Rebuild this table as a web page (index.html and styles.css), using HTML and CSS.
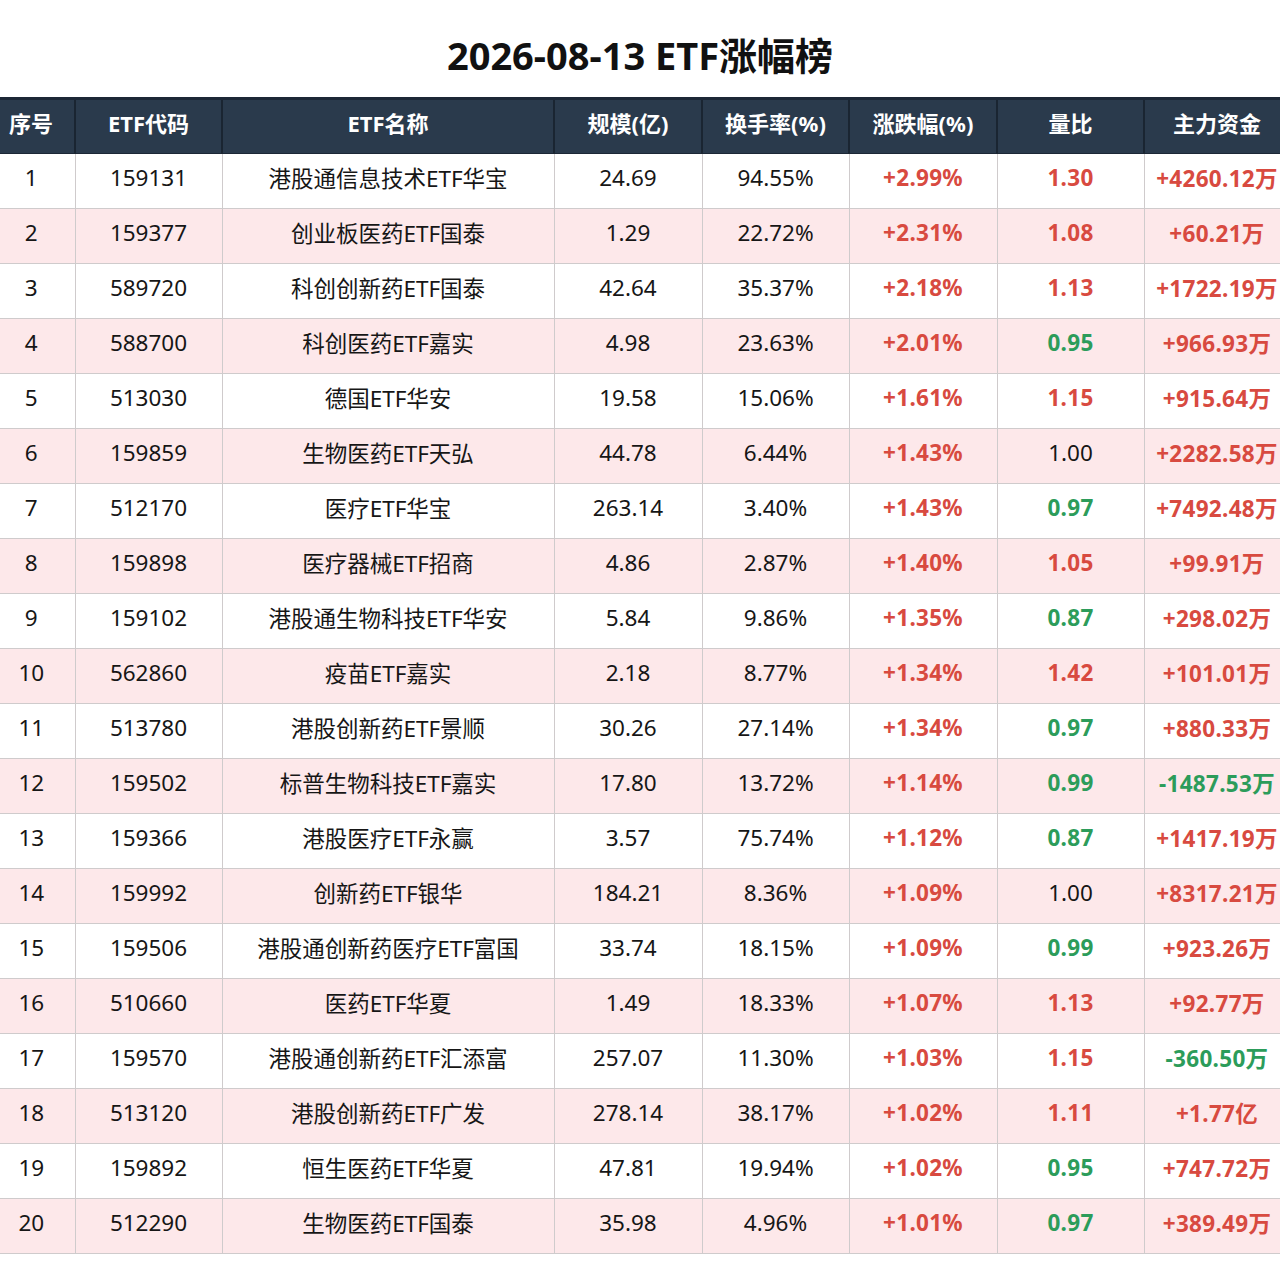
FILE: index.html
```html
<!DOCTYPE html>
<html lang="zh-CN">
<head>
<meta charset="utf-8">
<title>2026-08-13 ETF涨幅榜</title>
<link rel="stylesheet" href="styles.css">
</head>
<body>
<div class="page">
  <h1 class="title">2026-08-13 ETF涨幅榜</h1>
  <table class="rank">
    <colgroup>
      <col class="c-no"><col class="c-code"><col class="c-name"><col class="c-size">
      <col class="c-turn"><col class="c-chg"><col class="c-vr"><col class="c-flow">
    </colgroup>
    <thead>
      <tr><th>序号</th><th>ETF代码</th><th>ETF名称</th><th>规模(亿)</th><th>换手率(%)</th><th>涨跌幅(%)</th><th>量比</th><th>主力资金</th></tr>
    </thead>
    <tbody>
      <tr><td>1</td><td>159131</td><td>港股通信息技术ETF华宝</td><td>24.69</td><td>94.55%</td><td class="up">+2.99%</td><td class="up">1.30</td><td class="up">+4260.12万</td></tr>
      <tr><td>2</td><td>159377</td><td>创业板医药ETF国泰</td><td>1.29</td><td>22.72%</td><td class="up">+2.31%</td><td class="up">1.08</td><td class="up">+60.21万</td></tr>
      <tr><td>3</td><td>589720</td><td>科创创新药ETF国泰</td><td>42.64</td><td>35.37%</td><td class="up">+2.18%</td><td class="up">1.13</td><td class="up">+1722.19万</td></tr>
      <tr><td>4</td><td>588700</td><td>科创医药ETF嘉实</td><td>4.98</td><td>23.63%</td><td class="up">+2.01%</td><td class="down">0.95</td><td class="up">+966.93万</td></tr>
      <tr><td>5</td><td>513030</td><td>德国ETF华安</td><td>19.58</td><td>15.06%</td><td class="up">+1.61%</td><td class="up">1.15</td><td class="up">+915.64万</td></tr>
      <tr><td>6</td><td>159859</td><td>生物医药ETF天弘</td><td>44.78</td><td>6.44%</td><td class="up">+1.43%</td><td>1.00</td><td class="up">+2282.58万</td></tr>
      <tr><td>7</td><td>512170</td><td>医疗ETF华宝</td><td>263.14</td><td>3.40%</td><td class="up">+1.43%</td><td class="down">0.97</td><td class="up">+7492.48万</td></tr>
      <tr><td>8</td><td>159898</td><td>医疗器械ETF招商</td><td>4.86</td><td>2.87%</td><td class="up">+1.40%</td><td class="up">1.05</td><td class="up">+99.91万</td></tr>
      <tr><td>9</td><td>159102</td><td>港股通生物科技ETF华安</td><td>5.84</td><td>9.86%</td><td class="up">+1.35%</td><td class="down">0.87</td><td class="up">+298.02万</td></tr>
      <tr><td>10</td><td>562860</td><td>疫苗ETF嘉实</td><td>2.18</td><td>8.77%</td><td class="up">+1.34%</td><td class="up">1.42</td><td class="up">+101.01万</td></tr>
      <tr><td>11</td><td>513780</td><td>港股创新药ETF景顺</td><td>30.26</td><td>27.14%</td><td class="up">+1.34%</td><td class="down">0.97</td><td class="up">+880.33万</td></tr>
      <tr><td>12</td><td>159502</td><td>标普生物科技ETF嘉实</td><td>17.80</td><td>13.72%</td><td class="up">+1.14%</td><td class="down">0.99</td><td class="down">-1487.53万</td></tr>
      <tr><td>13</td><td>159366</td><td>港股医疗ETF永赢</td><td>3.57</td><td>75.74%</td><td class="up">+1.12%</td><td class="down">0.87</td><td class="up">+1417.19万</td></tr>
      <tr><td>14</td><td>159992</td><td>创新药ETF银华</td><td>184.21</td><td>8.36%</td><td class="up">+1.09%</td><td>1.00</td><td class="up">+8317.21万</td></tr>
      <tr><td>15</td><td>159506</td><td>港股通创新药医疗ETF富国</td><td>33.74</td><td>18.15%</td><td class="up">+1.09%</td><td class="down">0.99</td><td class="up">+923.26万</td></tr>
      <tr><td>16</td><td>510660</td><td>医药ETF华夏</td><td>1.49</td><td>18.33%</td><td class="up">+1.07%</td><td class="up">1.13</td><td class="up">+92.77万</td></tr>
      <tr><td>17</td><td>159570</td><td>港股通创新药ETF汇添富</td><td>257.07</td><td>11.30%</td><td class="up">+1.03%</td><td class="up">1.15</td><td class="down">-360.50万</td></tr>
      <tr><td>18</td><td>513120</td><td>港股创新药ETF广发</td><td>278.14</td><td>38.17%</td><td class="up">+1.02%</td><td class="up">1.11</td><td class="up">+1.77亿</td></tr>
      <tr><td>19</td><td>159892</td><td>恒生医药ETF华夏</td><td>47.81</td><td>19.94%</td><td class="up">+1.02%</td><td class="down">0.95</td><td class="up">+747.72万</td></tr>
      <tr><td>20</td><td>512290</td><td>生物医药ETF国泰</td><td>35.98</td><td>4.96%</td><td class="up">+1.01%</td><td class="down">0.97</td><td class="up">+389.49万</td></tr>
    </tbody>
  </table>
</div>
</body>
</html>
```

FILE: styles.css
```css
html, body {
  margin: 0;
  padding: 0;
  background: #ffffff;
  overflow: hidden;
}

body {
  font-family: "Noto Sans", "Noto Sans CJK SC", sans-serif;
  color: #161616;
}

.page {
  width: 1290px;
}

.title {
  margin: 0;
  width: 1280px;
  height: 97px;
  box-sizing: border-box;
  padding-top: 33px;
  text-align: center;
  font-size: 38px;
  line-height: 44px;
  font-weight: 700;
  color: #111111;
}

.rank {
  border-collapse: collapse;
  table-layout: fixed;
  width: 1302px;
  margin-left: -12px;
  font-size: 22.5px;
}

.c-no { width: 87px; }
.c-code { width: 147px; }
.c-name { width: 332px; }
.c-size { width: 148px; }
.c-turn { width: 147px; }
.c-chg { width: 148px; }
.c-vr { width: 147px; }
.c-flow { width: 146px; }

.rank th,
.rank td {
  padding: 0 0 7px 0;
  text-align: center;
  white-space: nowrap;
  overflow: visible;
}

.rank thead tr {
  height: 55px;
}

.rank th {
  background: #2a3a4c;
  color: #ffffff;
  font-weight: 700;
  font-size: 22px;
  padding-bottom: 9px;
  border-top: 3px solid #1c2836;
  border-left: 2px solid #1a2532;
  border-right: 2px solid #1a2532;
  border-bottom: 1px solid #1c2836;
}

.rank th:first-child { border-left: none; }

.rank tbody tr {
  height: 55px;
}

.rank td {
  border: 1px solid #cfcbcc;
  font-weight: 400;
}

.rank td:first-child { border-left: none; }

.rank tbody tr:nth-child(even) td {
  background: #fde8ea;
}

.rank td.up {
  color: #d84a40;
  font-weight: 700;
  letter-spacing: 0.3px;
}

.rank td.down {
  color: #2c9c5a;
  font-weight: 700;
  letter-spacing: 0.3px;
}
```
